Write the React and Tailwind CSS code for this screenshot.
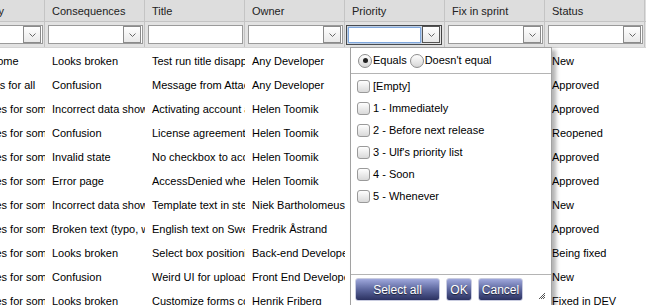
import { useState } from "react";

const columns = [
  { name: "Frequency", filter: "select" },
  { name: "Consequences", filter: "select" },
  { name: "Title", filter: "text" },
  { name: "Owner", filter: "select" },
  { name: "Priority", filter: "focused" },
  { name: "Fix in sprint", filter: "select" },
  { name: "Status", filter: "select" },
];

const some = "Sometimes for some users";

const rows = [
  ["Annoys some", "Looks broken", "Test run title disappears", "Any Developer", "", "", "New"],
  ["Any issues for all", "Confusion", "Message from Attachments", "Any Developer", "", "", "Approved"],
  [some, "Incorrect data shown", "Activating account again", "Helen Toomik", "", "", "Approved"],
  [some, "Confusion", "License agreement text", "Helen Toomik", "", "", "Reopened"],
  [some, "Invalid state", "No checkbox to accept", "Helen Toomik", "", "", "Approved"],
  [some, "Error page", "AccessDenied when saving", "Helen Toomik", "", "", "Approved"],
  [some, "Incorrect data shown", "Template text in steps", "Niek Bartholomeus", "", "", "New"],
  [some, "Broken text (typo, wrong)", "English text on Swedish", "Fredrik Åstrand", "", "", "Approved"],
  [some, "Looks broken", "Select box positioning", "Back-end Developer", "", "", "Being fixed"],
  [some, "Confusion", "Weird UI for upload", "Front End Developer", "", "", "New"],
  [some, "Looks broken", "Customize forms cc", "Henrik Friberg", "", "", "Fixed in DEV"],
];

const priorities = [
  "[Empty]",
  "1 - Immediately",
  "2 - Before next release",
  "3 - Ulf's priority list",
  "4 - Soon",
  "5 - Whenever",
];

const Chevron = () => (
  <svg width="9" height="6" viewBox="0 0 9 6">
    <path d="M1.5 1.5 L4.5 4.5 L7.5 1.5" fill="none" stroke="#666" strokeWidth="1" />
  </svg>
);

const DropButton = ({ dark }) => (
  <div
    className={`flex items-center justify-center w-[18px] h-[17px] bg-gradient-to-b from-white to-[#e8e8e8] border ${dark ? "border-[#555]" : "border-[#8a8a8a]"}`}
  >
    <Chevron />
  </div>
);

const FilterCell = ({ type }) => {
  if (type === "text") {
    return <div className="h-[19px] w-[95px] bg-white border border-[#9a9a9a]" />;
  }
  if (type === "focused") {
    return (
      <div className="flex items-center gap-[1px] h-[20px] w-[96px] border border-[#444] bg-[#e4e4e4] p-[1px] ml-[-2px]">
        <div className="h-[16px] w-[73px] bg-white border border-[#7fa7dc] shadow-[0_0_2px_#6fa0e0]" />
        <DropButton dark />
      </div>
    );
  }
  return (
    <div className="flex items-center justify-end h-[19px] w-[95px] bg-white border border-[#9a9a9a] pr-[1px]">
      <DropButton />
    </div>
  );
};

const Radio = ({ checked }) => (
  <div className="flex items-center justify-center w-[14px] h-[14px] rounded-full border border-[#8d8d8d] bg-gradient-to-b from-white to-[#d6d6d6]">
    {checked && <div className="w-[5px] h-[5px] rounded-full bg-[#222]" />}
  </div>
);

const Checkbox = () => (
  <div className="w-[13px] h-[13px] rounded-[3px] border border-[#9a9a9a] bg-gradient-to-b from-white to-[#d9d9d9]" />
);

const NavyButton = ({ children, width }) => (
  <button
    className={`${width} h-[23px] rounded-[3px] border border-[#c9cce0] bg-gradient-to-b from-[#9fa8dc] via-[#5d679e] to-[#2c3261] text-white text-[12px] [text-shadow:0_1px_1px_rgba(0,0,0,0.6)]`}
  >
    {children}
  </button>
);

const PriorityPopup = () => {
  const [equals, setEquals] = useState(true);

  return (
    <div className="absolute left-[350px] top-[47px] w-[202px] h-[262px] bg-white border border-[#a2a2a2] shadow-[4px_3px_4px_rgba(0,0,0,0.3)] flex flex-col">
      <div className="flex items-center h-[26px] border-b border-[#b4b4b4] pl-[7px]">
        <label className="flex items-center gap-[1px]" onClick={() => setEquals(true)}>
          <Radio checked={equals} />
          <span>Equals</span>
        </label>
        <label className="flex items-center gap-[1px] ml-[3px]" onClick={() => setEquals(false)}>
          <Radio checked={!equals} />
          <span>Doesn't equal</span>
        </label>
      </div>
      <div className="flex flex-col pt-[1px] pl-[6px] h-[200px]">
        {priorities.map((p) => (
          <div key={p} className="flex items-center gap-[3px] h-[22px]">
            <Checkbox />
            <span>{p}</span>
          </div>
        ))}
      </div>
      <div className="relative flex items-center gap-[6px] border-t border-[#b4b4b4] pl-[4px] pt-[3px]">
        <NavyButton width="w-[85px]">Select all</NavyButton>
        <NavyButton width="w-[26px]">OK</NavyButton>
        <NavyButton width="w-[45px]">Cancel</NavyButton>
        <svg className="absolute right-[5px] top-[17px]" width="8" height="8" viewBox="0 0 8 8">
          <path d="M7 1 L1 7 M7 3 L3 7 M7 5 L5 7" stroke="#555" strokeWidth="1" />
        </svg>
      </div>
    </div>
  );
};

const App = () => {
  return (
    <div className="relative w-[646px] h-[305px] overflow-hidden bg-white text-black font-['Liberation_Sans',Arial,sans-serif] text-[11px]">
      <div className="ml-[-55px] w-[800px]">
        <div className="flex h-[22px] bg-[#dddddd] border-b border-[#c4c4c4]">
          {columns.map((c) => (
            <div key={c.name} className="w-[100px] shrink-0 border-r border-[#c4c4c4] pl-[7px] leading-[22px] text-[#222] overflow-hidden whitespace-nowrap">
              {c.name}
            </div>
          ))}
        </div>
        <div className="flex h-[26px] bg-[#e2e2e2] border-b border-[#d4d4d4]">
          {columns.map((c) => (
            <div key={c.name} className="w-[100px] shrink-0 border-r border-[#c4c4c4] pl-[3px] flex items-center">
              <FilterCell type={c.filter} />
            </div>
          ))}
        </div>
        {rows.map((r, i) => (
          <div key={i} className="flex h-[24px] items-center pt-[2px]">
            {r.map((cell, j) => (
              <div key={j} className="w-[100px] shrink-0 pl-[7px] overflow-hidden whitespace-nowrap">
                {cell}
              </div>
            ))}
          </div>
        ))}
      </div>
      <PriorityPopup />
    </div>
  );
};

export default App;
